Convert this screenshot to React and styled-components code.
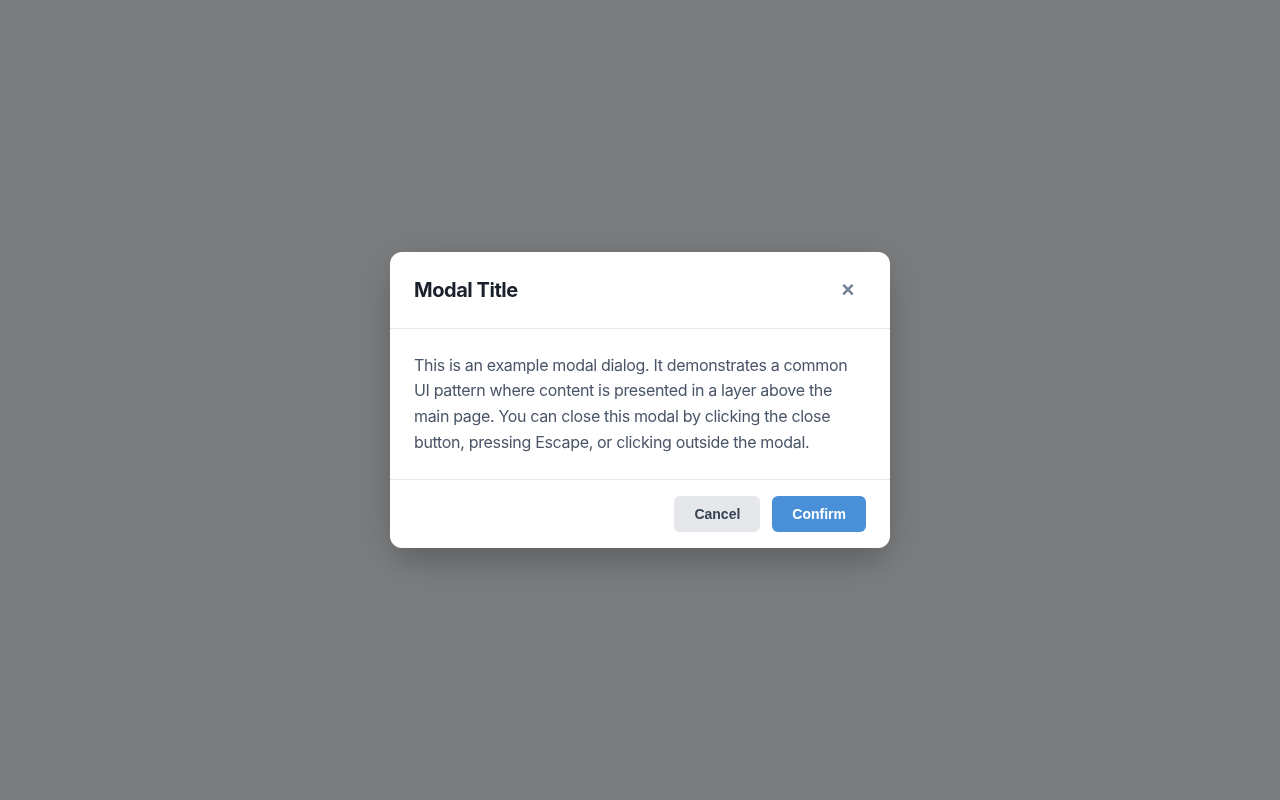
import React from "react";
import styled, { createGlobalStyle } from "styled-components";

const GlobalStyle = createGlobalStyle`
  html, body { margin: 0; padding: 0; }
  body {
    background: #f7fafc;
    font-family: Inter, "Noto Sans", sans-serif;
    -webkit-font-smoothing: antialiased;
  }
`;

const Overlay = styled.div`
  position: fixed;
  inset: 0;
  background: rgba(0, 0, 0, 0.5);
  display: flex;
  align-items: center;
  justify-content: center;
`;

const Dialog = styled.div`
  width: 500px;
  background: #ffffff;
  border-radius: 12px;
  box-shadow: 0 20px 25px -5px rgba(0, 0, 0, 0.1), 0 10px 50px rgba(0, 0, 0, 0.18);
  overflow: hidden;
`;

const Header = styled.div`
  display: flex;
  align-items: center;
  justify-content: space-between;
  padding: 24px;
  border-bottom: 1px solid #e2e8f0;
`;

const Title = styled.h2`
  margin: 0;
  font-size: 20px;
  line-height: 28px;
  font-weight: 700;
  letter-spacing: -0.45px;
  color: #1a202c;
`;

const CloseButton = styled.button`
  width: 36px;
  height: 28px;
  display: flex;
  align-items: center;
  justify-content: center;
  border: none;
  background: transparent;
  padding: 0;
  font-family: "Liberation Sans", Arial, sans-serif;
  font-size: 22px;
  font-weight: 700;
  line-height: 1;
  color: #718096;
  cursor: pointer;
`;

const Body = styled.div`
  padding: 24px;
  border-bottom: 1px solid #e2e8f0;
`;

const Text = styled.p`
  margin: 0;
  font-size: 16px;
  line-height: 25.6px;
  letter-spacing: -0.33px;
  color: #4a5568;
`;

const Footer = styled.div`
  display: flex;
  justify-content: flex-end;
  gap: 12px;
  padding: 16px 24px;
`;

const Button = styled.button`
  height: 36px;
  padding: 0 20px;
  border: none;
  border-radius: 6px;
  font-family: "Liberation Sans", Arial, sans-serif;
  font-size: 14px;
  font-weight: 700;
  cursor: pointer;
  background: ${(p) => (p.$primary ? "#4a90d9" : "#e5e7eb")};
  color: ${(p) => (p.$primary ? "#ffffff" : "#374151")};
`;

export default function App() {
  return (
    <>
      <GlobalStyle />
      <Overlay>
        <Dialog role="dialog" aria-modal="true">
          <Header>
            <Title>Modal Title</Title>
            <CloseButton aria-label="Close">×</CloseButton>
          </Header>
          <Body>
            <Text>
              This is an example modal dialog. It demonstrates a common UI pattern where
              content is presented in a layer above the main page. You can close this modal
              by clicking the close button, pressing Escape, or clicking outside the modal.
            </Text>
          </Body>
          <Footer>
            <Button>Cancel</Button>
            <Button $primary>Confirm</Button>
          </Footer>
        </Dialog>
      </Overlay>
    </>
  );
}
